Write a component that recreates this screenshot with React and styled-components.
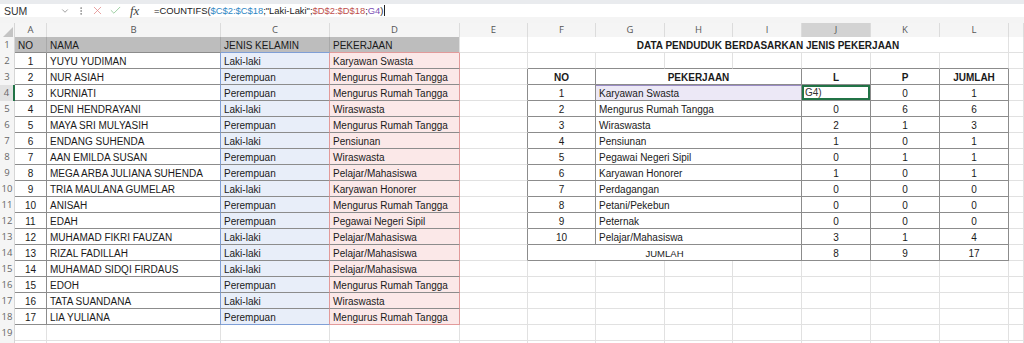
import React from 'react'
import styled, { createGlobalStyle } from 'styled-components'
import { ChevronDown, EllipsisVertical, X, Check } from 'lucide-react'

const GRID = '15px 32px 174px 109px 130px 68px 68px 69px 68px 69px 69px 69px 69px 1fr'

const GRIDLINE = '#e1e1e1'
const DARK = '#8c8c8c'
const BLUE = '#7f9fd6'
const RED = '#e29a9a'
const GREEN = '#217346'

const GlobalStyle = createGlobalStyle`
  body {
    margin: 0;
    background: #fff;
    overflow: hidden;
    font-family: "Liberation Sans", Arial, sans-serif;
  }
`

const Page = styled.div`
  width: 1024px;
  height: 343px;
  overflow: hidden;
`

const FormulaBar = styled.div`
  display: flex;
  align-items: center;
  height: 13px;
  padding: 4px 0 6px;
  background: #fff;
  box-shadow: inset 0 4px 0 #e9ebee, inset 0 -6px 0 #f4f4f4;
  font-family: "Liberation Sans", sans-serif;
`

const NameBox = styled.div`
  display: flex;
  align-items: center;
  justify-content: space-between;
  width: 66px;
  padding: 0 3px 0 4px;
  font-size: 10.5px;
  color: #333;
`

const Tools = styled.div`
  display: flex;
  align-items: center;
  gap: 5px;
  width: 78px;
  padding-left: 3px;
  color: #777;
`

const Fx = styled.span`
  font-family: "Liberation Serif", serif;
  font-style: italic;
  font-size: 13px;
  color: #444;
  margin-left: 3px;
`

const FormulaText = styled.div`
  font-size: 9.4px;
  color: #222;
  white-space: nowrap;
`

const Ref = styled.span`
  color: ${p => p.$c};
`

const Caret = styled.span`
  display: inline-block;
  width: 1px;
  height: 11px;
  margin-left: 1px;
  background: #222;
  vertical-align: -2px;
`

const HeaderRow = styled.div`
  display: grid;
  grid-template-columns: ${GRID};
  height: 14px;
`

const Corner = styled.div`
  display: flex;
  align-items: flex-end;
  justify-content: flex-end;
  background: #f5f5f5;
  border-right: 1px solid #d6d6d6;
  border-bottom: 1px solid #c8c8c8;
  padding: 0 1px 1px 0;
`

const ColHead = styled.div`
  box-sizing: border-box;
  background: ${p => (p.$active ? '#d3d3d3' : '#f5f5f5')};
  border-right: 1px solid #dcdcdc;
  border-bottom: ${p => (p.$active ? `2px solid ${GREEN}` : '1px solid #c8c8c8')};
  font-family: "Open Sans", sans-serif;
  font-size: 9.5px;
  line-height: 14px;
  color: #555;
  text-align: center;
`

const Row = styled.div`
  display: grid;
  grid-template-columns: ${GRID};
  height: 16px;
`

const RowHead = styled.div`
  box-sizing: border-box;
  background: ${p => (p.$active ? '#e2e2e2' : '#f5f5f5')};
  border-right: ${p => (p.$active ? `2px solid ${GREEN}` : '1px solid #d6d6d6')};
  border-bottom: 1px solid #e4e4e4;
  font-family: "Open Sans", sans-serif;
  font-size: 9.5px;
  line-height: 16px;
  color: #666;
  text-align: center;
`

const Cell = styled.div`
  box-sizing: border-box;
  grid-column: span ${p => p.$span || 1};
  height: 16px;
  padding: 2px 3px 0;
  background: ${p => p.$bg || '#fff'};
  border-right: 1px solid ${p => p.$r};
  border-bottom: 1px solid ${p => p.$b};
  box-shadow: ${p => p.$ring || 'none'};
  font-size: ${p => p.$size || 10}px;
  font-weight: ${p => (p.$bold ? 700 : 400)};
  line-height: 13px;
  color: #1a1a1a;
  text-align: ${p => p.$align || 'left'};
  white-space: nowrap;
  overflow: hidden;
`

const EditCell = styled(Cell)`
  display: flex;
  flex-direction: column;
  justify-content: flex-end;
  padding: 0 3px 1px;
  background: #fff;
  box-shadow: inset 0 0 0 2px ${GREEN};
  line-height: 12px;
  text-align: left;
`

const EditLine = styled.div`
  color: #333;
`

const people = [
  ['YUYU YUDIMAN', 'Laki-laki', 'Karyawan Swasta'],
  ['NUR ASIAH', 'Perempuan', 'Mengurus Rumah Tangga'],
  ['KURNIATI', 'Perempuan', 'Mengurus Rumah Tangga'],
  ['DENI HENDRAYANI', 'Laki-laki', 'Wiraswasta'],
  ['MAYA SRI MULYASIH', 'Perempuan', 'Mengurus Rumah Tangga'],
  ['ENDANG SUHENDA', 'Laki-laki', 'Pensiunan'],
  ['AAN EMILDA SUSAN', 'Perempuan', 'Wiraswasta'],
  ['MEGA ARBA JULIANA SUHENDA', 'Perempuan', 'Pelajar/Mahasiswa'],
  ['TRIA MAULANA GUMELAR', 'Laki-laki', 'Karyawan Honorer'],
  ['ANISAH', 'Perempuan', 'Mengurus Rumah Tangga'],
  ['EDAH', 'Perempuan', 'Pegawai Negeri Sipil'],
  ['MUHAMAD FIKRI FAUZAN', 'Laki-laki', 'Pelajar/Mahasiswa'],
  ['RIZAL FADILLAH', 'Laki-laki', 'Pelajar/Mahasiswa'],
  ['MUHAMAD SIDQI FIRDAUS', 'Laki-laki', 'Pelajar/Mahasiswa'],
  ['EDOH', 'Perempuan', 'Mengurus Rumah Tangga'],
  ['TATA SUANDANA', 'Laki-laki', 'Wiraswasta'],
  ['LIA YULIANA', 'Perempuan', 'Mengurus Rumah Tangga'],
]

const jobs = [
  ['Karyawan Swasta', null, 0, 1],
  ['Mengurus Rumah Tangga', 0, 6, 6],
  ['Wiraswasta', 2, 1, 3],
  ['Pensiunan', 1, 0, 1],
  ['Pegawai Negeri Sipil', 0, 1, 1],
  ['Karyawan Honorer', 1, 0, 1],
  ['Perdagangan', 0, 0, 0],
  ['Petani/Pekebun', 0, 0, 0],
  ['Peternak', 0, 0, 0],
  ['Pelajar/Mahasiswa', 3, 1, 4],
]

const letters = ['A', 'B', 'C', 'D', 'E', 'F', 'G', 'H', 'I', 'J', 'K', 'L', '']

// border colour on the right edge of a cell ending at column `last`
const rightColor = (r, last) => {
  if (r === 1 && last <= 3) return '#a9a9a9'
  if (r >= 2 && r <= 18) {
    if (last === 1) return DARK
    if (last === 2) return BLUE
    if (last === 3 || last === 4) return RED
  }
  if (r >= 3 && r <= 14 && last >= 5 && last <= 12) return DARK
  return GRIDLINE
}

const bottomColor = (r, c) => {
  if (r === 1 && c <= 4) return c === 3 ? BLUE : c === 4 ? RED : DARK
  if (r >= 2 && r <= 18 && c <= 4) {
    if (r === 18) return c === 3 ? BLUE : c === 4 ? RED : DARK
    return DARK
  }
  if (r >= 2 && r <= 14 && c >= 6 && c <= 12) return DARK
  return GRIDLINE
}

const blanks = (from, to) => {
  const out = []
  for (let c = from; c <= to; c++) out.push({ c })
  return out
}

const cellsFor = r => {
  let left
  if (r === 1) {
    left = ['NO', 'NAMA', 'JENIS KELAMIN', 'PEKERJAAN'].map((t, i) => ({ c: i + 1, text: t, bg: '#bdbdbd' }))
  } else if (r <= 18) {
    const [name, sex, job] = people[r - 2]
    left = [
      { c: 1, text: r - 1, align: 'center' },
      { c: 2, text: name },
      { c: 3, text: sex, bg: '#e8eef9' },
      { c: 4, text: job, bg: '#fbe8e8' },
    ]
  } else {
    left = blanks(1, 4)
  }

  let right
  if (r === 1) {
    right = [{ c: 6, span: 7, text: 'DATA PENDUDUK BERDASARKAN JENIS PEKERJAAN', align: 'center', bold: true }]
  } else if (r === 3) {
    right = [
      { c: 6, text: 'NO', align: 'center', bold: true },
      { c: 7, span: 3, text: 'PEKERJAAN', align: 'center', bold: true },
      { c: 10, text: 'L', align: 'center', bold: true },
      { c: 11, text: 'P', align: 'center', bold: true },
      { c: 12, text: 'JUMLAH', align: 'center', bold: true },
    ]
  } else if (r >= 4 && r <= 13) {
    const [job, l, p, total] = jobs[r - 4]
    right = [
      { c: 6, text: r - 3, align: 'center' },
      {
        c: 7,
        span: 3,
        text: job,
        bg: r === 4 ? '#ece8f6' : undefined,
        ring: r === 4 ? 'inset 0 1px 0 #9a8cc4' : undefined,
      },
      { c: 10, text: l, align: 'center', edit: r === 4 },
      { c: 11, text: p, align: 'center' },
      { c: 12, text: total, align: 'center' },
    ]
  } else if (r === 14) {
    right = [
      { c: 6, span: 4, text: 'JUMLAH', align: 'center', size: 9.5 },
      { c: 10, text: 8, align: 'center' },
      { c: 11, text: 9, align: 'center' },
      { c: 12, text: 17, align: 'center' },
    ]
  } else {
    right = blanks(6, 12)
  }

  return [...left, { c: 5 }, ...right, { c: 13 }]
}

const SheetCell = ({ r, cell }) => {
  const span = cell.span || 1
  const props = {
    $span: span,
    $r: rightColor(r, cell.c + span - 1),
    $b: bottomColor(r, cell.c),
    $bg: cell.bg,
    $align: cell.align,
    $bold: cell.bold,
    $size: cell.size,
    $ring: cell.ring,
  }
  if (cell.edit) {
    // cell in edit mode: the wrapped formula shows only its last line
    return (
      <EditCell {...props}>
        <EditLine>$D$2:$D$18;</EditLine>
        <EditLine>G4)</EditLine>
      </EditCell>
    )
  }
  return <Cell {...props}>{cell.text}</Cell>
}

const rows = Array.from({ length: 20 }, (_, i) => i + 1)

export default function App() {
  return (
    <Page>
      <GlobalStyle />
      <FormulaBar>
        <NameBox>
          SUM
          <ChevronDown size={10} strokeWidth={1.5} color="#666" />
        </NameBox>
        <Tools>
          <EllipsisVertical size={10} strokeWidth={2} color="#888" />
          <X size={13} strokeWidth={1.4} color="#e08585" />
          <Check size={13} strokeWidth={1.4} color="#7fbf86" />
          <Fx>fx</Fx>
        </Tools>
        <FormulaText>
          =COUNTIFS(<Ref $c="#2f86c4">$C$2:$C$18</Ref>;"Laki-Laki";
          <Ref $c="#c0504d">$D$2:$D$18</Ref>;<Ref $c="#7a4fb5">G4</Ref>)
          <Caret />
        </FormulaText>
      </FormulaBar>

      <HeaderRow>
        <Corner>
          <svg width="10" height="10" viewBox="0 0 10 10">
            <polygon points="10,0 10,10 0,10" fill="#c4c4c4" />
          </svg>
        </Corner>
        {letters.map((l, i) => (
          <ColHead key={i} $active={l === 'J'}>
            {l}
          </ColHead>
        ))}
      </HeaderRow>

      {rows.map(r => (
        <Row key={r}>
          <RowHead $active={r === 4}>{r}</RowHead>
          {cellsFor(r).map(cell => (
            <SheetCell key={cell.c} r={r} cell={cell} />
          ))}
        </Row>
      ))}
    </Page>
  )
}
